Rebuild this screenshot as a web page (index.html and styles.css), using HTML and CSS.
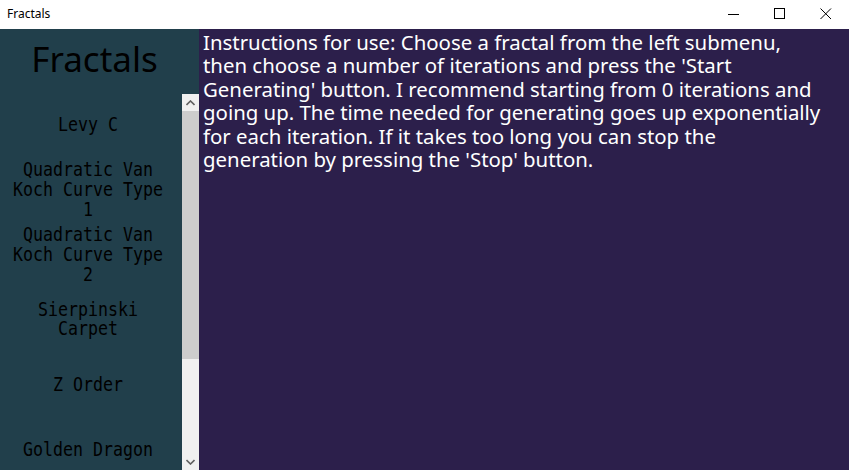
FILE: index.html
```html
<!DOCTYPE html>
<html>
<head>
<meta charset="utf-8">
<link rel="stylesheet" href="styles.css">
</head>
<body>
<div class="app">
  <div class="titlebar">
    <span class="title">Fractals</span>
    <div class="controls">
      <span class="ctl"><svg width="12" height="12" viewBox="0 0 12 12"><path d="M0 6.5H11" stroke="#000" stroke-width="1"/></svg></span>
      <span class="ctl"><svg width="12" height="12" viewBox="0 0 12 12"><rect x="0.5" y="0.5" width="10" height="10" fill="none" stroke="#000" stroke-width="1"/></svg></span>
      <span class="ctl"><svg width="12" height="12" viewBox="0 0 12 12"><path d="M0.5 0.5L11 11M11 0.5L0.5 11" stroke="#000" stroke-width="1"/></svg></span>
    </div>
  </div>
  <div class="window">
    <div class="sidebar">
      <div class="brand">Fractals</div>
      <div class="listrow">
        <div class="menu">
          <div class="item"><span class="label">Levy C</span></div>
          <div class="item"><span class="label">Quadratic Van<br>Koch Curve Type<br>1</span></div>
          <div class="item"><span class="label">Quadratic Van<br>Koch Curve Type<br>2</span></div>
          <div class="item"><span class="label">Sierpinski<br>Carpet</span></div>
          <div class="item"><span class="label">Z Order</span></div>
          <div class="item"><span class="label">Golden Dragon</span></div>
        </div>
        <div class="scrollbar">
          <div class="arrow"><svg width="9" height="6" viewBox="0 0 9 6"><path d="M0.5 5L4.5 1L8.5 5" fill="none" stroke="#606060" stroke-width="1.6"/></svg></div>
          <div class="thumb"></div>
          <div class="track"></div>
          <div class="arrow"><svg width="9" height="6" viewBox="0 0 9 6"><path d="M0.5 1L4.5 5L8.5 1" fill="none" stroke="#606060" stroke-width="1.6"/></svg></div>
        </div>
      </div>
    </div>
    <div class="main">
      <p class="instructions">Instructions for use: Choose a fractal from the left submenu,<br>then choose a number of iterations and press the 'Start<br>Generating' button. I recommend starting from 0 iterations and<br>going up. The time needed for generating goes up exponentially<br>for each iteration. If it takes too long you can stop the<br>generation by pressing the 'Stop' button.</p>
    </div>
  </div>
</div>
</body>
</html>
```
FILE: styles.css
```css
html, body {
  margin: 0;
  padding: 0;
}
body {
  width: 849px;
  height: 470px;
  overflow: hidden;
  background: #fff;
}
.app {
  display: flex;
  flex-direction: column;
  height: 470px;
}
.titlebar {
  height: 29px;
  flex: none;
  display: flex;
  align-items: center;
  justify-content: space-between;
  background: #fff;
}
.title {
  font-family: "Noto Sans", "Liberation Sans", sans-serif;
  font-size: 12px;
  color: #000;
  padding-left: 7px;
  padding-bottom: 2px;
}
.controls {
  display: flex;
  align-items: center;
  height: 29px;
}
.ctl {
  width: 46px;
  height: 29px;
  display: flex;
  align-items: center;
  justify-content: center;
}
.ctl svg {
  display: block;
  margin-top: -1px;
}
.window {
  flex: 1;
  display: flex;
  min-height: 0;
}
.sidebar {
  width: 199px;
  flex: none;
  background: #213f4b;
  display: flex;
  flex-direction: column;
  min-height: 0;
}
.brand {
  height: 63px;
  flex: none;
  font-family: "Noto Sans", "Liberation Sans", sans-serif;
  font-size: 35px;
  color: #000;
  text-align: center;
  line-height: 60px;
  padding-right: 10px;
}
.listrow {
  flex: 1;
  display: flex;
  min-height: 0;
}
.menu {
  width: 182px;
  flex: none;
  overflow: hidden;
}
.item {
  height: 65px;
  display: flex;
  align-items: center;
  justify-content: center;
  text-align: center;
  font-family: "DejaVu Sans Mono", "Liberation Mono", monospace;
  font-size: 16.6px;
  line-height: 17.3px;
  color: #000;
  padding-right: 6px;
}
.label {
  display: inline-block;
  transform: scaleY(1.15);
}
.scrollbar {
  width: 17px;
  flex: none;
  margin-top: 2px;
  background: #f0f0f0;
  display: flex;
  flex-direction: column;
}
.arrow {
  height: 17px;
  flex: none;
  display: flex;
  align-items: center;
  justify-content: center;
}
.thumb {
  height: 248px;
  flex: none;
  background: #cdcdcd;
}
.track {
  flex: 1;
}
.main {
  flex: 1;
  background: #2c1f4b;
  padding: 2px 0 0 4px;
}
.instructions {
  margin: 0;
  font-family: "Noto Sans", "Liberation Sans", sans-serif;
  font-size: 20.4px;
  line-height: 23.4px;
  color: #fff;
  white-space: nowrap;
}
```
